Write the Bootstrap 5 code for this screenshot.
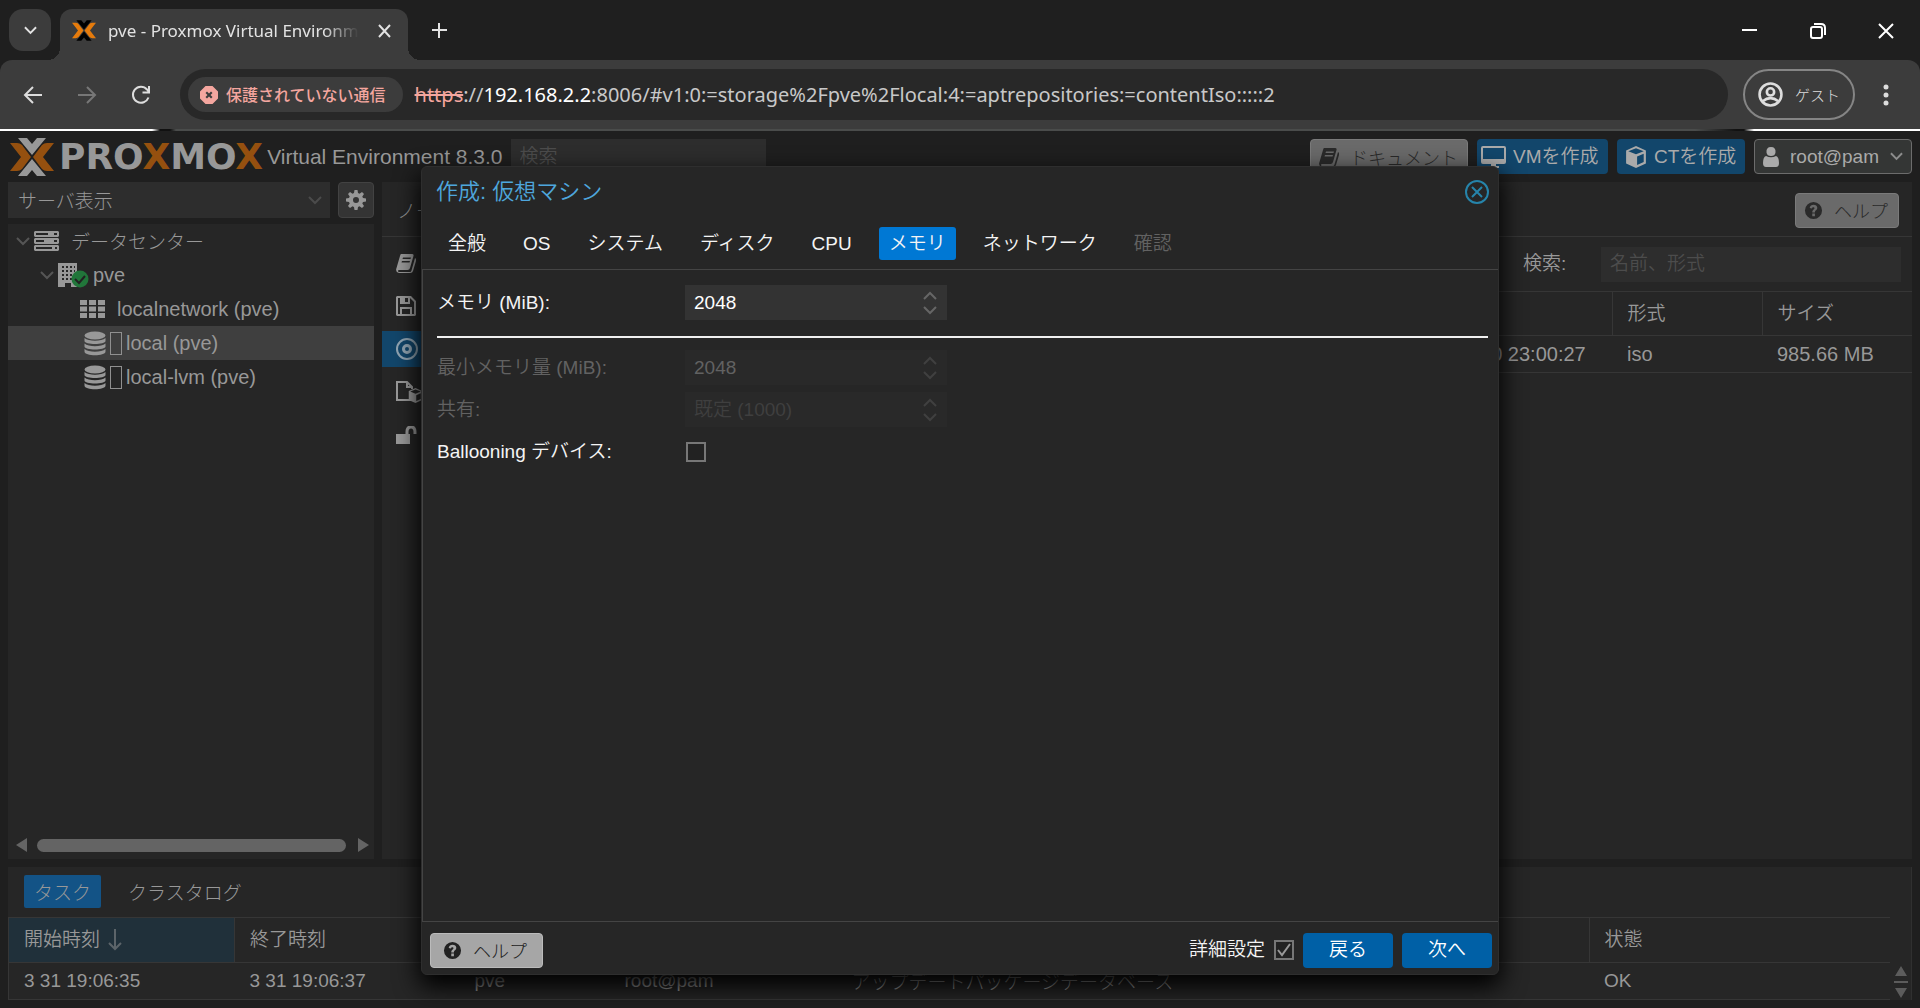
<!DOCTYPE html>
<html lang="ja">
<head>
<meta charset="utf-8">
<meta name="viewport" content="width=device-width, initial-scale=1">
<title>pve - Proxmox Virtual Environment</title>
<link href="https://cdn.jsdelivr.net/npm/bootstrap@5.3.0/dist/css/bootstrap.min.css" rel="stylesheet">
<style>
:root{--dim:#989898;--panel:#262626;--line:#363636}
body{font:350 19px/28px "Liberation Sans","Noto Sans CJK JP",sans-serif;background:#1f1f1f;color:var(--dim);height:100vh;overflow:hidden}
button,input,select{font:inherit;color:inherit}
svg{display:block;flex:none;fill:currentColor}
.ln{fill:none;stroke:currentColor}
.plain{background:none;border:0;padding:0}
.jp{font-family:"Noto Sans CJK JP",sans-serif;font-weight:300}

/* browser frame */
.strip{height:60px;padding:9px 0 0 9px;color:#e3e3e3;font-family:"Noto Sans",sans-serif;font-weight:400}
.tabsearch{width:42px;height:42px;border:0;padding:0;border-radius:14px;background:#3c3c3c}
.pagetab{width:348px;height:51px;margin-left:9px;padding:0 17px 8px 12px;background:#3c3c3c;border-radius:12px 12px 0 0;position:relative}
.pagetab::before,.pagetab::after{content:"";position:absolute;bottom:0;width:12px;height:12px}
.pagetab::before{left:-12px;background:radial-gradient(circle at 0 0,#1f1f1f 12px,#3c3c3c 12px)}
.pagetab::after{right:-12px;background:radial-gradient(circle at 100% 0,#1f1f1f 12px,#3c3c3c 12px)}
.pagename{font-size:17px;white-space:nowrap;-webkit-mask-image:linear-gradient(90deg,#000 86%,transparent)}
.winbtns{gap:52px;padding-right:26px;color:#fff}
.tools{height:69px;background:#3c3c3c;border-radius:12px 12px 0 0;padding:0 31px 0 22px;color:#ddd}
.next{margin-left:32px;color:#777}
.reload{margin-left:32px}
.omni{height:51px;border-radius:26px;background:#282828;padding-left:8px;margin:0 15px 0 28px}
.chip{height:35px;border-radius:18px;background:#3c3c3c;color:#f4a69f;padding:0 17px 0 12px;font:500 16px/35px "Noto Sans CJK JP",sans-serif}
.url{font:400 20px/35px "Noto Sans",sans-serif;color:#c8c8c8}
.url b{font-weight:400;color:#fff}
.url s{color:#f4a69f}
.guest{height:51px;width:112px;background:none;padding:0;border:2px solid #858585;border-radius:26px;font:300 15px/28px "Noto Sans CJK JP",sans-serif}
.edge{height:2px;background:linear-gradient(90deg,#fff 152px,#111 160px,#111 170px,#4a4c4b 176px,#4a4c4b calc(100% - 225px),#111 calc(100% - 184px),#111 calc(100% - 176px),#fff calc(100% - 166px))}

/* product header */
.top{height:51px;padding:0 8px 0 10px}
.brandword{font:700 36px/38px "DejaVu Sans",sans-serif;color:#989898;margin-left:5px}
.brandword i{font-style:normal;color:#95500f}
.ver{font-size:21px;margin-left:4px;white-space:nowrap}
.field{height:35px;background:#2d2d2d;border:0;border-radius:0;padding:0 9px;color:var(--dim);min-width:0}
.field::placeholder{color:#4c4c4c;opacity:1}
.tbtn{height:35px;border:0;border-radius:4px;padding:0;background:#12466b;color:#aaa;gap:7px;white-space:nowrap}
.tbtn.pale{background:#6a6a6a;color:#2a2a2a;border:1px solid #7a7a7a}
.tbtn.pale .jp{font-size:18px}
.tbtn.user{background:#343635;border:1px solid #6c6c6c}
.acts{gap:9px}
.docs{width:158px}.vm{width:131px}.ct{width:128px}.user{width:158px}

/* panels */
.side{width:366px;flex:none}
.serverview{height:36px;width:322px;background:#2d2d2d}
.serverview select{appearance:none;background:none;border:0;width:100%;padding:0 10px}
.gear{width:36px;height:36px;padding:0;background:#343434;border:1px solid #424242;border-radius:4px}
.tree{background:var(--panel);margin-top:6px}
.node{height:34px;padding-left:8px;font-size:20px}
.node.l1{padding-left:32px}.node.l2{padding-left:72px}
.node.on{background:#3f3f3f}
.tofu{width:12px;height:23px;border:1px solid #909090;margin:0 4px}
.hscroll{height:24px;padding:0 5px 4px 8px;color:#646464}
.thumb{height:13px;border-radius:7px;background:#646464;margin:0 12px 0 10px}
.pane{background:var(--panel)}
.panehead{height:55px;padding:2px 13px 0 15px;border-bottom:1px solid var(--line)}
.menu{width:49px}
.menu a{height:36px;margin-bottom:7px;padding-left:14px;color:#999}
.menu a.on{background:#12466b;color:#91a5b3}
.cells{color:var(--dim);margin:0;table-layout:fixed;--bs-table-bg:transparent;--bs-table-color:var(--dim);border-color:var(--line)}
.cells th{font-weight:350;height:44px;padding:0 15px;border:1px solid var(--line);border-right:0;vertical-align:middle}
.cells td{height:37px;padding:0 15px;border-bottom:1px solid var(--line);vertical-align:middle;white-space:nowrap}
.log{margin:8px 8px 8px;border-right:1px solid #303030}
.logtabs{height:50px;padding:0 16px 2px;gap:17px}
.logtabs button,.wiztabs button{height:33px;border:0;border-radius:2px;padding:0 10px;background:none;line-height:33px}
.logtabs .active{background:#135386}
.cells .sorted{background:#20303a}
.log .cells th{height:45px}
.log .cells td:first-child{border-left:1px solid var(--line)}
.vs{width:21px;color:#5c5c5c}

/* wizard */
.veil{position:absolute;inset:131px 0 0;padding-top:2px;pointer-events:none}
.wizard{pointer-events:auto;width:1078px;min-height:809px;background:var(--panel);border:1px solid #2e2e2e;border-radius:6px;box-shadow:0 10px 24px 2px #000;color:#f4f4f4}
.wizhead{height:49px;padding:0 8px 0 14px;font-size:22px;color:#4ea6dd}
.wiztabs{height:53px;padding:11px 16px 0;gap:17px}
.wiztabs .active{background:#0078d4;border-radius:3px}
.wizbody{border:1px solid #444;border-width:1px 0 1px 1px;padding:15px 10px 0 14px}
.frow{min-height:35px;margin-bottom:7px}
.frow>label{width:248px}
.spin{width:262px;height:35px;background:#333;padding-right:10px;color:#666}
.spin input{background:none;border:0;color:#fff;padding:0 9px}
.off{color:#626262}.off .spin{background:#292929;color:#404040}
.off .spin input{color:#626262}.off .spin input::placeholder{color:#3f3f3f;opacity:1}
.rule{height:2px;background:#f0f0f0;opacity:1;border:0;margin:16px 0 12px}
.tick{appearance:none;width:20px;height:20px;border:2px solid #777;margin:0;background:#222}
.frow .tick{margin-left:1px}
.tick:checked{background:url("data:image/svg+xml,%3Csvg xmlns='http://www.w3.org/2000/svg' viewBox='0 0 16 16'%3E%3Cpath d='M2 8l4 5 8-11' fill='none' stroke='%23999' stroke-width='2'/%3E%3C/svg%3E") #222}
.wizfoot{height:52px;padding:4px 6px 0 8px;gap:9px}
.wizfoot .tbtn{width:90px;background:#0060a6;color:#fff}
.wizfoot .tbtn.pale{width:113px;background:#a6a6a6;border-color:#bbb;color:#222}
</style>
</head>
<body class="d-flex flex-column">
<svg width="0" height="0" class="position-absolute" aria-hidden="true">
<symbol id="down" viewBox="0 0 14 9"><path d="M1 1l6 6 6-6" class="ln" stroke-width="2"/></symbol>
<symbol id="help" viewBox="0 0 20 20"><path fill-rule="evenodd" d="M10 1a9 9 0 100 18 9 9 0 000-18zM8.700 13.200h2.800V16H8.700zM6 7.300C6.300 5 8 3.900 10 3.900c2.300 0 4 1.300 4 3.300 0 2.600-2.500 2.600-2.500 4.900H8.700c0-3.100 2.300-3.100 2.300-4.500 0-.7-.5-1.100-1.200-1.100-.8 0-1.200.5-1.400 1.300z"/></symbol>
<symbol id="cube" viewBox="0 0 20 20"><path fill-rule="evenodd" d="M10 0l9 4v12l-9 4-9-4V4zM3 4.700L10 7.500l7-2.800L10 2zM11 17.200l6-2.700V7l-6 2.500z"/></symbol>
<symbol id="db" viewBox="0 0 22 24"><ellipse cx="11" cy="4" rx="10.500" ry="4"/><path d="M.5 6.500c4 3.500 17 3.500 21 0v3c0 4-21 4-21 0zM.5 12c4 3.500 17 3.500 21 0v3c0 4-21 4-21 0zM.5 17.500c4 3.500 17 3.500 21 0V20c0 5-21 5-21 0z"/></symbol>
<symbol id="book" viewBox="0 0 20 20"><path fill-rule="evenodd" d="M5 1h11q2 0 1.500 2L14 15q-.5 2-2.500 2H3q-1 0-1 1t1 1h11q1 0 1.500-1.500L19 5q1.500 1 1 3l-3 10q-.5 2-3 2H3q-4-1-2.500-5L4 3Q4.500 1 5 1zM7 4.500l-.5 1.500h8l.5-1.500zM6 8l-.5 1.500h8L14 8z"/></symbol>
<symbol id="spin" viewBox="0 0 14 24"><path d="M1 8l6-6 6 6M1 16l6 6 6-6" class="ln" stroke-width="2"/></symbol>
<symbol id="xmark" viewBox="0 0 44 40"><path fill="var(--c1)" d="M8 1h9l5 6 5-6h9L22 18zM8 39h9l5-6 5 6h9L22 22z"/><path fill="var(--c2)" d="M0 6h7q3 0 5 2l9 12-9 12q-2 2-5 2H0l11-14zM44 6h-7q-3 0-5 2l-9 12 9 12q2 2 5 2h7L33 20z"/></symbol>
</svg>

<header>
<div class="strip d-flex">
<button class="tabsearch d-flex align-items-center justify-content-center" aria-label="タブを検索"><svg width="13" height="9"><use href="#down"/></svg></button>
<div class="pagetab d-flex align-items-center">
<svg width="24" height="23" class="me-2" style="--c1:#000;--c2:#e57b0c"><use href="#xmark"/></svg>
<span class="pagename ms-1">pve - Proxmox Virtual Environm</span>
<button class="plain ms-auto" aria-label="タブを閉じる"><svg width="13" height="14" class="ln" stroke-width="2"><path d="M1 1l11 12M12 1L1 13"/></svg></button>
</div>
<button class="plain ms-4 pb-2" aria-label="新しいタブ"><svg width="15" height="15" class="ln" stroke-width="2"><path d="M7 0v15M0 7h15"/></svg></button>
<div class="winbtns d-flex align-items-center ms-auto pb-2">
<button class="plain" aria-label="最小化"><svg width="16" height="16" class="ln" stroke-width="2"><path d="M0 7h15"/></svg></button>
<button class="plain" aria-label="元に戻す"><svg width="16" height="16" class="ln" stroke-width="2"><rect x="1" y="4" width="11" height="11" rx="2"/><path d="M4 1h7q4 0 4 4v7"/></svg></button>
<button class="plain" aria-label="閉じる"><svg width="16" height="16" class="ln" stroke-width="2"><path d="M1 1l14 14M15 1L1 15"/></svg></button>
</div>
</div>
<div class="tools d-flex align-items-center">
<button class="plain" aria-label="戻る"><svg width="22" height="20" class="ln" stroke-width="2"><path d="M20 10H3M11 2l-8 8 8 8"/></svg></button>
<button class="plain next" aria-label="進む"><svg width="22" height="20" class="ln" stroke-width="2"><path d="M2 10h17M11 2l8 8-8 8"/></svg></button>
<button class="plain reload" aria-label="再読み込み"><svg width="22" height="22" class="ln" stroke-width="2"><path d="M18.500 13.500A8 8 0 1117 5.500L19 8M19 2v6.500h-6.500"/></svg></button>
<div class="omni d-flex align-items-center flex-grow-1">
<span class="chip d-flex align-items-center"><svg width="18" height="18" class="me-2"><path fill-rule="evenodd" d="M5.500 0h7L18 5.500v7L12.500 18h-7L0 12.500v-7zM5.500 7l2 2-2 2L7 12.500l2-2 2 2 1.500-1.500-2-2 2-2L11 5.500l-2 2-2-2z"/></svg>保護されていない通信</span>
<span class="url ms-2 ps-1"><s>https</s>://<b>192.168.2.2</b>:8006/#v1:0:=storage%2Fpve%2Flocal:4:=aptrepositories:=contentIso:::::2</span>
</div>
<button class="guest d-flex align-items-center justify-content-center"><svg width="25" height="25" viewBox="0 0 24 24" class="ln me-2" stroke-width="2.500"><circle cx="12" cy="12" r="10.500"/><circle cx="12" cy="9.500" r="3.500"/><path d="M4.500 18.500q7.500-6 15 0"/></svg><span class="ms-1">ゲスト</span></button>
<button class="plain ps-4 ms-1" aria-label="メニュー"><svg width="6" height="22"><circle cx="3" cy="3" r="2.500"/><circle cx="3" cy="11" r="2.500"/><circle cx="3" cy="19" r="2.500"/></svg></button>
</div>
<div class="edge"></div>
</header>

<main class="d-flex flex-column flex-grow-1">
<div class="top d-flex align-items-center">
<svg width="44" height="40" style="--c1:#989898;--c2:#95500f"><use href="#xmark"/></svg>
<span class="brandword">PRO<i>X</i>MO<i>X</i></span>
<span class="ver">Virtual Environment 8.3.0</span>
<input class="field ms-2" style="width:255px" placeholder="検索" aria-label="検索">
<div class="acts d-flex ms-auto">
<button class="tbtn pale docs d-flex align-items-center ps-2"><svg width="20" height="20"><use href="#book"/></svg><span class="jp ms-1">ドキュメント</span></button>
<button class="tbtn vm d-flex align-items-center ps-1"><svg width="25" height="22"><path fill-rule="evenodd" d="M2 0h21q2 0 2 2v14q0 2-2 2h-8v2h3v2H7v-2h3v-2H2q-2 0-2-2V2q0-2 2-2zM2 2v11h21V2z"/></svg><span>VMを作成</span></button>
<button class="tbtn ct d-flex align-items-center ps-1"><svg width="22" height="22" class="ms-1"><use href="#cube"/></svg><span>CTを作成</span></button>
<button class="tbtn user d-flex align-items-center ps-2"><svg width="16" height="20"><path d="M8 0q5 0 4.500 5.500Q12 9 8 9T3.500 5.500Q3 0 8 0zM3 9q5 2.500 10 0 3 1 3 7 0 4-3 4H3q-3 0-3-4 0-6 3-7z"/></svg><span class="ms-1">root@pam</span><svg width="13" height="9" class="ms-1 opacity-75"><use href="#down"/></svg></button>
</div>
</div>

<div class="d-flex flex-grow-1 px-2">
<div class="side d-flex flex-column me-2">
<div class="d-flex justify-content-between">
<div class="serverview d-flex align-items-center pe-2"><select class="jp" aria-label="表示"><option>サーバ表示</option></select><svg width="14" height="9" style="color:#4b4b4b"><use href="#down"/></svg></div>
<button class="gear d-flex align-items-center justify-content-center" aria-label="設定"><svg width="20" height="20" viewBox="0 0 20 20"><path fill-rule="evenodd" d="M8.500 0h3l.5 3 1.500.7L16 2l2 2-1.700 2.500L17 8l3 .5v3l-3 .5-.7 1.500L18 16l-2 2-2.500-1.700L12 17l-.5 3h-3L8 17l-1.500-.7L4 18l-2-2 1.700-2.500L3 12l-3-.5v-3L3 8l.7-1.500L2 4l2-2 2.500 1.700L8 3zM10 7a3 3 0 100 6 3 3 0 000-6z"/></svg></button>
</div>
<div class="tree flex-grow-1 d-flex flex-column">
<div class="node d-flex align-items-center"><svg width="14" height="9" style="color:#555"><use href="#down"/></svg><svg width="25" height="20" class="ms-1"><path fill-rule="evenodd" d="M1 0h23l1 1v4l-1 1H1L0 5V1zM2 2v2h12V2zM20 2v2h3V2zM1 7h23l1 1v4l-1 1H1l-1-1V8zM2 9v2h8V9zM20 9v2h3V9zM1 14h23l1 1v4l-1 1H1l-1-1v-4zM2 16v2h16v-2zM21 16v2h2v-2z"/></svg><span class="jp ms-2 ps-1" style="font-size:19px">データセンター</span></div>
<div class="node l1 d-flex align-items-center"><svg width="14" height="9" style="color:#555"><use href="#down"/></svg><svg width="31" height="26" class="ms-1"><path fill-rule="evenodd" d="M0 1h19v24h-6v-4H7v4H0z"/><path d="M4 5h13M4 9h13M4 13h13M4 17h13" stroke="#262626" stroke-width="2" stroke-dasharray="2 2"/><circle cx="22" cy="17" r="8.500" fill="#21763a"/><path d="M17 17l4 4 6-7" fill="none" stroke="#222" stroke-width="2"/></svg><span class="ms-1">pve</span></div>
<div class="node l2 d-flex align-items-center"><svg width="25" height="20"><path d="M0 3.500h25M0 10h25M0 16.500h25" stroke="currentColor" stroke-width="5" stroke-dasharray="7 2"/></svg><span class="ms-2 ps-1">localnetwork (pve)</span></div>
<div class="node l2 on d-flex align-items-center"><svg width="22" height="25" class="ms-1"><use href="#db"/></svg><span class="tofu"></span><span>local (pve)</span></div>
<div class="node l2 d-flex align-items-center"><svg width="22" height="25" class="ms-1"><use href="#db"/></svg><span class="tofu"></span><span>local-lvm (pve)</span></div>
<div class="hscroll d-flex align-items-center mt-auto"><svg width="11" height="14"><path d="M11 0v14L0 7z"/></svg><div class="thumb flex-grow-1"></div><svg width="11" height="14"><path d="M0 0v14l11-7z"/></svg></div>
</div>
</div>

<div class="pane flex-grow-1 d-flex flex-column">
<div class="panehead d-flex align-items-center justify-content-between"><span class="jp">ノード</span>
<button class="tbtn pale d-flex align-items-center ps-2" style="width:104px"><svg width="19" height="19"><use href="#help"/></svg><span class="jp ms-1">ヘルプ</span></button></div>
<div class="d-flex flex-grow-1">
<nav class="menu pt-2">
<a href="#" class="d-flex align-items-center" aria-label="概要"><svg width="20" height="20"><use href="#book"/></svg></a>
<a href="#" class="d-flex align-items-center" aria-label="バックアップ"><svg width="20" height="20"><path fill-rule="evenodd" d="M1 0h14l5 5v14l-1 1H1l-1-1V1zM2 2v16h2v-7h12v7h2V6l-4-4v6H4V2zM9 2v4h3V2zM6 13v5h8v-5z"/></svg></a>
<a href="#" class="on d-flex align-items-center" aria-label="ISOイメージ"><svg width="22" height="22" class="ln" stroke-width="2"><circle cx="11" cy="11" r="10"/><circle cx="11" cy="11" r="3.500" stroke-width="3"/></svg></a>
<a href="#" class="d-flex align-items-center" aria-label="CTテンプレート"><svg width="28" height="22"><path d="M15 19H1V1h10l5 5v2M11 1v5h5" class="ln" stroke-width="2"/><svg x="12" y="7" width="15" height="15"><use href="#cube"/></svg></svg></a>
<a href="#" class="d-flex align-items-center" aria-label="権限"><svg width="21" height="18"><path d="M0 8h14v10H0z"/><path d="M11 9V6q0-5 4-5t4 5v2" class="ln" stroke-width="3"/></svg></a>
</nav>
<div class="flex-grow-1">
<div class="d-flex align-items-center justify-content-end" style="height:54px;padding-right:11px"><label for="find" style="width:78px">検索:</label><input id="find" class="field" style="width:300px" placeholder="名前、形式"></div>
<table class="table cells">
<colgroup><col><col style="width:227px"><col style="width:150px"><col style="width:150px"></colgroup>
<thead><tr><th></th><th></th><th>形式</th><th>サイズ</th></tr></thead>
<tbody style="font-size:20px"><tr><td></td><td>2025-03-30 23:00:27</td><td>iso</td><td>985.66 MB</td></tr></tbody>
</table>
</div>
</div>
</div>
</div>

<section class="pane log">
<div class="logtabs d-flex align-items-center"><button class="active jp">タスク</button><button class="jp">クラスタログ</button></div>
<div class="d-flex">
<table class="table cells">
<colgroup><col style="width:226px"><col style="width:225px"><col style="width:150px"><col style="width:227px"><col><col style="width:301px"></colgroup>
<thead><tr><th class="sorted"><span class="d-flex align-items-center gap-2">開始時刻<svg width="14" height="22" class="ln opacity-50" stroke-width="2"><path d="M7 0v20M1 14l6 6 6-6"/></svg></span></th><th>終了時刻</th><th></th><th></th><th></th><th>状態</th></tr></thead>
<tbody><tr><td>3 31 19:06:35</td><td>3 31 19:06:37</td><td>pve</td><td>root@pam</td><td class="jp">アップデートパッケージデータベース</td><td>OK</td></tr></tbody>
</table>
<div class="vs d-flex flex-column align-items-center justify-content-end flex-shrink-0"><svg width="14" height="34"><path d="M7 0l6 10H1zM0 15h14v2H0zM7 32l6-10H1z"/></svg></div>
</div>
</section>
</main>

<div class="veil d-flex align-items-center justify-content-center">
<div class="wizard d-flex flex-column" role="dialog" aria-labelledby="wt">
<div class="wizhead d-flex align-items-center justify-content-between"><span id="wt">作成: 仮想マシン</span>
<button class="plain" aria-label="閉じる"><svg width="26" height="26" class="ln" stroke-width="2" style="color:#2684aa"><circle cx="13" cy="13" r="11"/><path d="M8 8l10 10M18 8L8 18"/></svg></button></div>
<div class="wiztabs d-flex"><button>全般</button><button>OS</button><button>システム</button><button>ディスク</button><button>CPU</button><button class="active">メモリ</button><button>ネットワーク</button><button class="off" disabled>確認</button></div>
<div class="wizbody flex-grow-1">
<div class="frow d-flex align-items-center mb-0"><label for="mem">メモリ (MiB):</label><div class="spin d-flex align-items-center"><input id="mem" class="w-100" value="2048"><svg width="14" height="24"><use href="#spin"/></svg></div></div>
<hr class="rule">
<div class="frow off d-flex align-items-center"><label for="min">最小メモリ量 (MiB):</label><div class="spin d-flex align-items-center"><input id="min" class="w-100" value="2048" disabled><svg width="14" height="24"><use href="#spin"/></svg></div></div>
<div class="frow off d-flex align-items-center"><label for="shr">共有:</label><div class="spin d-flex align-items-center"><input id="shr" class="w-100" placeholder="既定 (1000)" disabled><svg width="14" height="24"><use href="#spin"/></svg></div></div>
<div class="frow d-flex align-items-center"><label for="bal">Ballooning デバイス:</label><input id="bal" type="checkbox" class="tick"></div>
</div>
<div class="wizfoot d-flex align-items-center">
<button class="tbtn pale d-flex align-items-center me-auto ps-2"><svg width="19" height="19" class="ms-1"><use href="#help"/></svg><span class="jp ms-1">ヘルプ</span></button>
<label for="adv">詳細設定</label><input id="adv" type="checkbox" class="tick" checked>
<button class="tbtn">戻る</button><button class="tbtn">次へ</button>
</div>
</div>
</div>
<script src="https://cdn.jsdelivr.net/npm/bootstrap@5.3.0/dist/js/bootstrap.bundle.min.js"></script>
</body>
</html>
